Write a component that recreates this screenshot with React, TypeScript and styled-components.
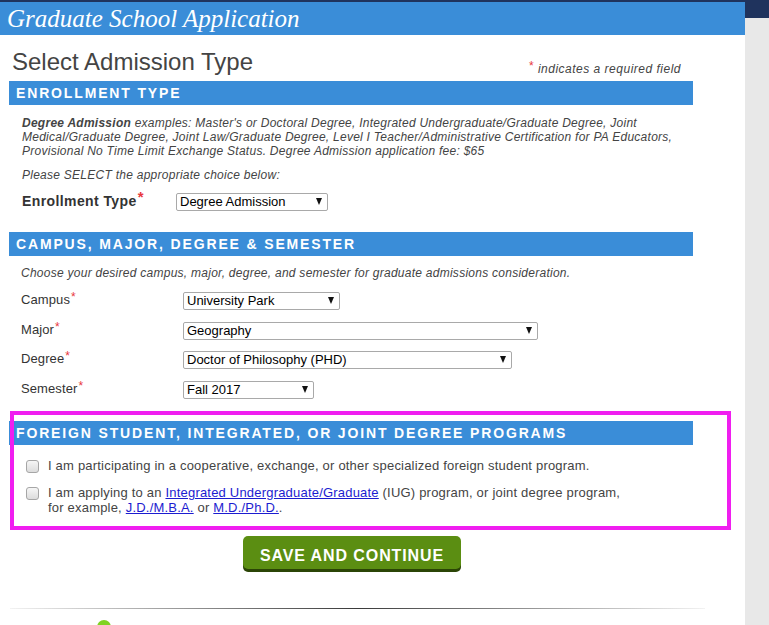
import React from "react";
import styled, { createGlobalStyle } from "styled-components";

const GlobalStyle = createGlobalStyle`
  html, body {
    margin: 0;
    padding: 0;
    overflow: hidden;
    background: #fff;
  }
  body {
    font-family: "Liberation Sans", Arial, sans-serif;
    color: #444;
  }
`;

const Page = styled.div`
  display: flex;
  min-height: 625px;
`;

const Main = styled.div`
  width: 745px;
  flex-shrink: 0;
  background: #fff;
  border-top: 2px solid #1f335d;
`;

const Side = styled.div`
  flex: 1;
  background: #e8e8e8;
  border-top: 18px solid #1f335d;
`;

const AppHeader = styled.header`
  height: 33px;
  background: #3a8dd8;
  padding-left: 7px;
`;

const AppTitle = styled.h1`
  margin: 0;
  font: italic normal 25px/33px "Liberation Serif", "Times New Roman", serif;
  color: #fff;
`;

const Content = styled.div`
  width: 684px;
  padding-left: 9px;
`;

const TitleRow = styled.div`
  display: flex;
  justify-content: space-between;
  align-items: flex-end;
  padding: 13px 12px 5px 3px;
`;

const PageTitle = styled.h2`
  margin: 0;
  font: normal 24px/28px "Liberation Sans", Arial, sans-serif;
  color: #444;
`;

const Note = styled.span`
  font: italic 12px/14px "Liberation Sans", Arial, sans-serif;
  letter-spacing: 0.5px;
  color: #444;
`;

const Req = styled.span<{ $big?: boolean }>`
  color: #e8383d;
  font-style: normal;
  font-size: ${(p) => (p.$big ? "15px" : "12px")};
  vertical-align: ${(p) => (p.$big ? "4px" : "3px")};
  line-height: 0;
  margin-left: 1px;
`;

const SectionBar = styled.h3`
  margin: 0;
  height: 24px;
  padding-left: 7px;
  background: #3a8dd8;
  color: #fff;
  font: bold 14px/24px "Liberation Sans", Arial, sans-serif;
  letter-spacing: 1.85px;
  text-transform: uppercase;
`;

const Section = styled.section<{ $pad: number; $after: number }>`
  position: relative;
  padding-left: ${(p) => p.$pad}px;
  margin-bottom: ${(p) => p.$after}px;
  & > ${SectionBar} {
    margin-left: -${(p) => p.$pad}px;
  }
`;

const Highlight = styled(Section)`
  &::after {
    content: "";
    position: absolute;
    left: 1px;
    top: -10px;
    width: 721px;
    height: 119px;
    box-sizing: border-box;
    border: 4px solid #f01ef0;
    pointer-events: none;
  }
`;

const Help = styled.p<{ $top: number }>`
  margin: ${(p) => p.$top}px 0 0;
  font: italic 12px/14px "Liberation Sans", Arial, sans-serif;
  letter-spacing: 0.26px;
  color: #444;
  white-space: nowrap;
`;

const FieldRow = styled.div<{ $label: number; $top: number }>`
  display: grid;
  grid-template-columns: ${(p) => p.$label}px auto;
  align-items: center;
  height: 18px;
  margin-top: ${(p) => p.$top}px;
`;

const FieldLabel = styled.label<{ $strong?: boolean }>`
  font: ${(p) => (p.$strong ? "bold 14px" : "13px")} / 18px "Liberation Sans", Arial, sans-serif;
  letter-spacing: ${(p) => (p.$strong ? "0.4px" : "0.1px")};
  color: ${(p) => (p.$strong ? "#333" : "#333")};
`;

const SelectBox = styled.div<{ $w: number }>`
  position: relative;
  width: ${(p) => p.$w}px;
  height: 18px;
  &::after {
    content: "";
    position: absolute;
    right: 6px;
    top: 6px;
    border-left: 3.5px solid transparent;
    border-right: 3.5px solid transparent;
    border-top: 7px solid #111;
    pointer-events: none;
  }
`;

const Select = styled.select`
  appearance: none;
  -webkit-appearance: none;
  width: 100%;
  height: 18px;
  box-sizing: border-box;
  margin: 0;
  padding: 0 16px 0 3px;
  border: 1px solid #a9a9a9;
  border-radius: 2px;
  background: #fff;
  color: #000;
  font: 13px/16px "Liberation Sans", Arial, sans-serif;
  outline: none;
`;

const CheckRow = styled.label<{ $top: number }>`
  display: flex;
  align-items: flex-start;
  gap: 9px;
  margin-top: ${(p) => p.$top}px;
  font: 13px/15px "Liberation Sans", Arial, sans-serif;
  color: #444;
`;

const Check = styled.input`
  appearance: none;
  -webkit-appearance: none;
  flex-shrink: 0;
  width: 13px;
  height: 13px;
  margin: 2px 0 0;
  border: 1px solid #a6a6a6;
  border-radius: 3px;
  background: linear-gradient(#f6f6f6, #dcdcdc);
  box-sizing: border-box;
`;

const CheckText = styled.span`
  white-space: nowrap;
  letter-spacing: 0.2px;
`;

const Link = styled.a`
  color: #1c1cd0;
  text-decoration: underline;
`;

const ButtonRow = styled.div`
  display: flex;
  justify-content: center;
  padding-left: 2px;
`;

const SaveButton = styled.button`
  width: 218px;
  height: 33px;
  box-sizing: border-box;
  padding: 6px 0 0;
  border: none;
  border-radius: 5px;
  background: #5b8e12;
  box-shadow: 0 3px 0 #2b4506;
  color: #fff;
  font: bold 16px/27px "Liberation Sans", Arial, sans-serif;
  letter-spacing: 0.9px;
  cursor: pointer;
`;

const Rule = styled.hr`
  width: 695px;
  height: 1px;
  margin: 39px 0 0 10px;
  border: none;
  background: linear-gradient(
    to right,
    rgba(0, 0, 0, 0.05),
    #3a3a3a 50%,
    rgba(0, 0, 0, 0.05)
  );
`;

const Footer = styled.footer`
  padding: 11px 0 0 97px;
`;

const Dot = styled.span`
  display: block;
  width: 14px;
  height: 14px;
  border-radius: 50%;
  background: #7fd321;
`;

const fields = [
  { label: "Campus", value: "University Park", width: 157, top: 11 },
  { label: "Major", value: "Geography", width: 355, top: 12 },
  { label: "Degree", value: "Doctor of Philosophy (PHD)", width: 329, top: 11 },
  { label: "Semester", value: "Fall 2017", width: 131, top: 12 },
];

export default function App() {
  return (
    <>
      <GlobalStyle />
      <Page>
        <Main>
          <AppHeader>
            <AppTitle>Graduate School Application</AppTitle>
          </AppHeader>
          <Content>
            <TitleRow>
              <PageTitle>Select Admission Type</PageTitle>
              <Note>
                <Req>*</Req> indicates a required field
              </Note>
            </TitleRow>

            <Section $pad={13} $after={22}>
              <SectionBar>Enrollment Type</SectionBar>
              <Help $top={11}>
                <b>Degree Admission</b> examples: Master's or Doctoral Degree,
                Integrated Undergraduate/Graduate Degree, Joint
                <br />
                Medical/Graduate Degree, Joint Law/Graduate Degree, Level I
                Teacher/Administrative Certification for PA Educators,
                <br />
                Provisional No Time Limit Exchange Status. Degree Admission
                application fee: $65
              </Help>
              <Help $top={10}>Please SELECT the appropriate choice below:</Help>
              <FieldRow $label={154} $top={10}>
                <FieldLabel $strong>
                  Enrollment Type<Req $big>*</Req>
                </FieldLabel>
                <SelectBox $w={152}>
                  <Select defaultValue="Degree Admission">
                    <option>Degree Admission</option>
                  </Select>
                </SelectBox>
              </FieldRow>
            </Section>

            <Section $pad={12} $after={23}>
              <SectionBar>Campus, Major, Degree &amp; Semester</SectionBar>
              <Help $top={10}>
                Choose your desired campus, major, degree, and semester for
                graduate admissions consideration.
              </Help>
              {fields.map((f) => (
                <FieldRow key={f.label} $label={162} $top={f.top}>
                  <FieldLabel>
                    {f.label}
                    <Req>*</Req>
                  </FieldLabel>
                  <SelectBox $w={f.width}>
                    <Select defaultValue={f.value}>
                      <option>{f.value}</option>
                    </Select>
                  </SelectBox>
                </FieldRow>
              ))}
            </Section>

            <Highlight $pad={17} $after={21}>
              <SectionBar>
                Foreign Student, Integrated, or Joint Degree Programs
              </SectionBar>
              <CheckRow $top={13}>
                <Check type="checkbox" />
                <CheckText>
                  I am participating in a cooperative, exchange, or other
                  specialized foreign student program.
                </CheckText>
              </CheckRow>
              <CheckRow $top={12}>
                <Check type="checkbox" />
                <CheckText>
                  I am applying to an{" "}
                  <Link href="#">Integrated Undergraduate/Graduate</Link> (IUG)
                  program, or joint degree program,
                  <br />
                  for example, <Link href="#">J.D./M.B.A.</Link> or{" "}
                  <Link href="#">M.D./Ph.D.</Link>.
                </CheckText>
              </CheckRow>
            </Highlight>

            <ButtonRow>
              <SaveButton type="button">SAVE AND CONTINUE</SaveButton>
            </ButtonRow>
          </Content>
          <Rule />
          <Footer>
            <Dot />
          </Footer>
        </Main>
        <Side />
      </Page>
    </>
  );
}
